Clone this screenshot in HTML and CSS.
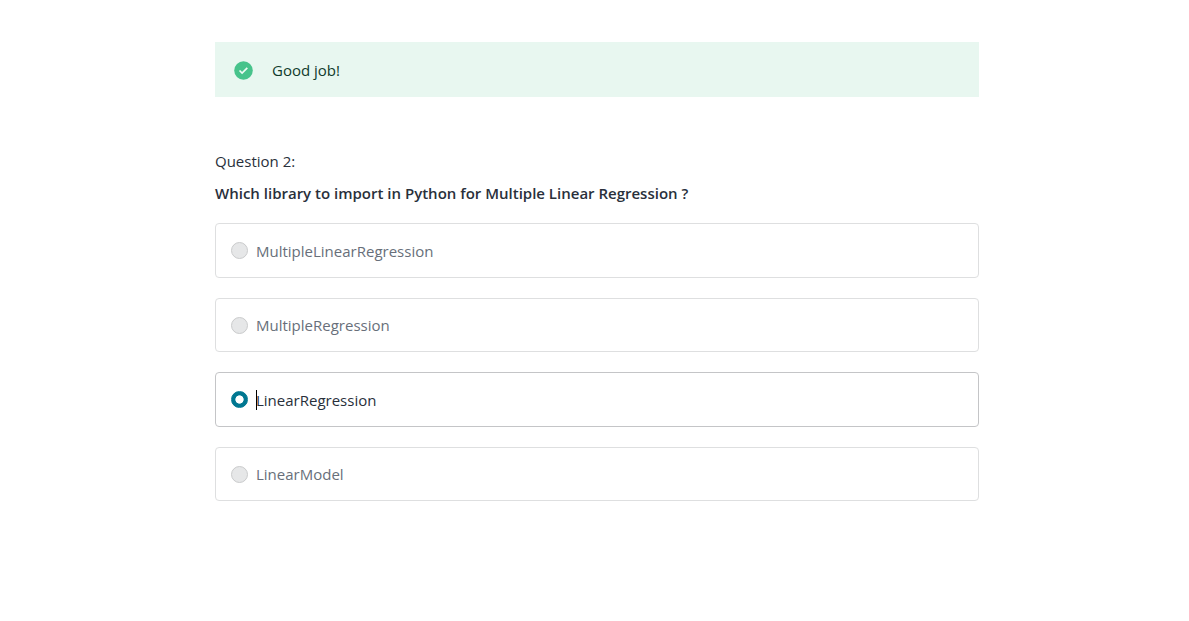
FILE: index.html
```html
<!DOCTYPE html>
<html lang="en">
<head>
<meta charset="utf-8">
<meta name="viewport" content="width=device-width, initial-scale=1">
<title>Question 2</title>
<link rel="stylesheet" href="styles.css">
</head>
<body>
<main class="page">
  <div class="quiz">
    <div class="feedback" role="status">
      <svg class="feedback-icon" viewBox="0 0 19 19" aria-hidden="true">
        <circle cx="9.5" cy="9.5" r="9.3" fill="#47c38b"/>
        <path d="M5.5 9.5l2.6 2.6 5.2-5.2" fill="none" stroke="#effaf4" stroke-width="1.7"/>
      </svg>
      <p class="feedback-text">Good job!</p>
    </div>
    <form class="question">
      <p class="question-number">Question 2:</p>
      <h1 class="question-title" id="question-title">Which library to import in Python for Multiple Linear Regression ?</h1>
      <div class="options" role="radiogroup" aria-labelledby="question-title">
        <label class="option"><input class="radio" type="radio" name="answer" disabled><span>MultipleLinearRegression</span></label>
        <label class="option"><input class="radio" type="radio" name="answer" disabled><span>MultipleRegression</span></label>
        <label class="option option-selected"><input class="radio" type="radio" name="answer" checked><span class="option-text"><span class="caret"></span>LinearRegression</span></label>
        <label class="option"><input class="radio" type="radio" name="answer" disabled><span>LinearModel</span></label>
      </div>
    </form>
  </div>
</main>
</body>
</html>
```

FILE: styles.css
```css
* {
  box-sizing: border-box;
}

body {
  margin: 0;
  background: #fff;
  color: #29303b;
  font-family: "Open Sans", "Noto Sans", sans-serif;
  font-size: 15px;
  line-height: 22px;
}

.page {
  padding: 42px 0 40px 5px;
}

.quiz {
  width: 100%;
  max-width: 764px;
  margin: 0 auto;
}

.feedback {
  display: flex;
  align-items: center;
  gap: 19px;
  min-height: 55px;
  padding: 17px 19px 16px;
  background: #e8f7f0;
  color: #0f3b2c;
}

.feedback-icon {
  flex: none;
  width: 19px;
  height: 19px;
}

.feedback-text,
.question-number,
.question-title {
  margin: 0;
}

.question {
  margin-top: 53px;
}

.question-title {
  margin: 10px 0 19px;
  font-size: 15px;
  font-weight: 600;
  line-height: 22px;
}

.options {
  display: grid;
  grid-auto-rows: 1fr;
  gap: 20px;
  min-height: 278px;
}

.option {
  display: flex;
  align-items: center;
  gap: 8px;
  padding: 1px 15px 0;
  border: 1px solid #dedfe0;
  border-radius: 4px;
  color: #686f7a;
}

.option-selected {
  border-color: #c4c5c7;
  color: #29303b;
}

.radio {
  appearance: none;
  flex: none;
  width: 17px;
  height: 17px;
  margin: 0;
  border: 1px solid #cacbcc;
  border-radius: 50%;
  background: #e6e7e8;
}

.radio:checked {
  border-color: #007791;
  background: radial-gradient(circle, #fff 25%, #007791 38%) #007791;
  background: radial-gradient(circle closest-side, #fff 50%, #007791 60%);
}

.option-text {
  position: relative;
}

.caret {
  position: absolute;
  top: 1px;
  left: 0;
  width: 1px;
  height: 20px;
  background: #000;
}
```
